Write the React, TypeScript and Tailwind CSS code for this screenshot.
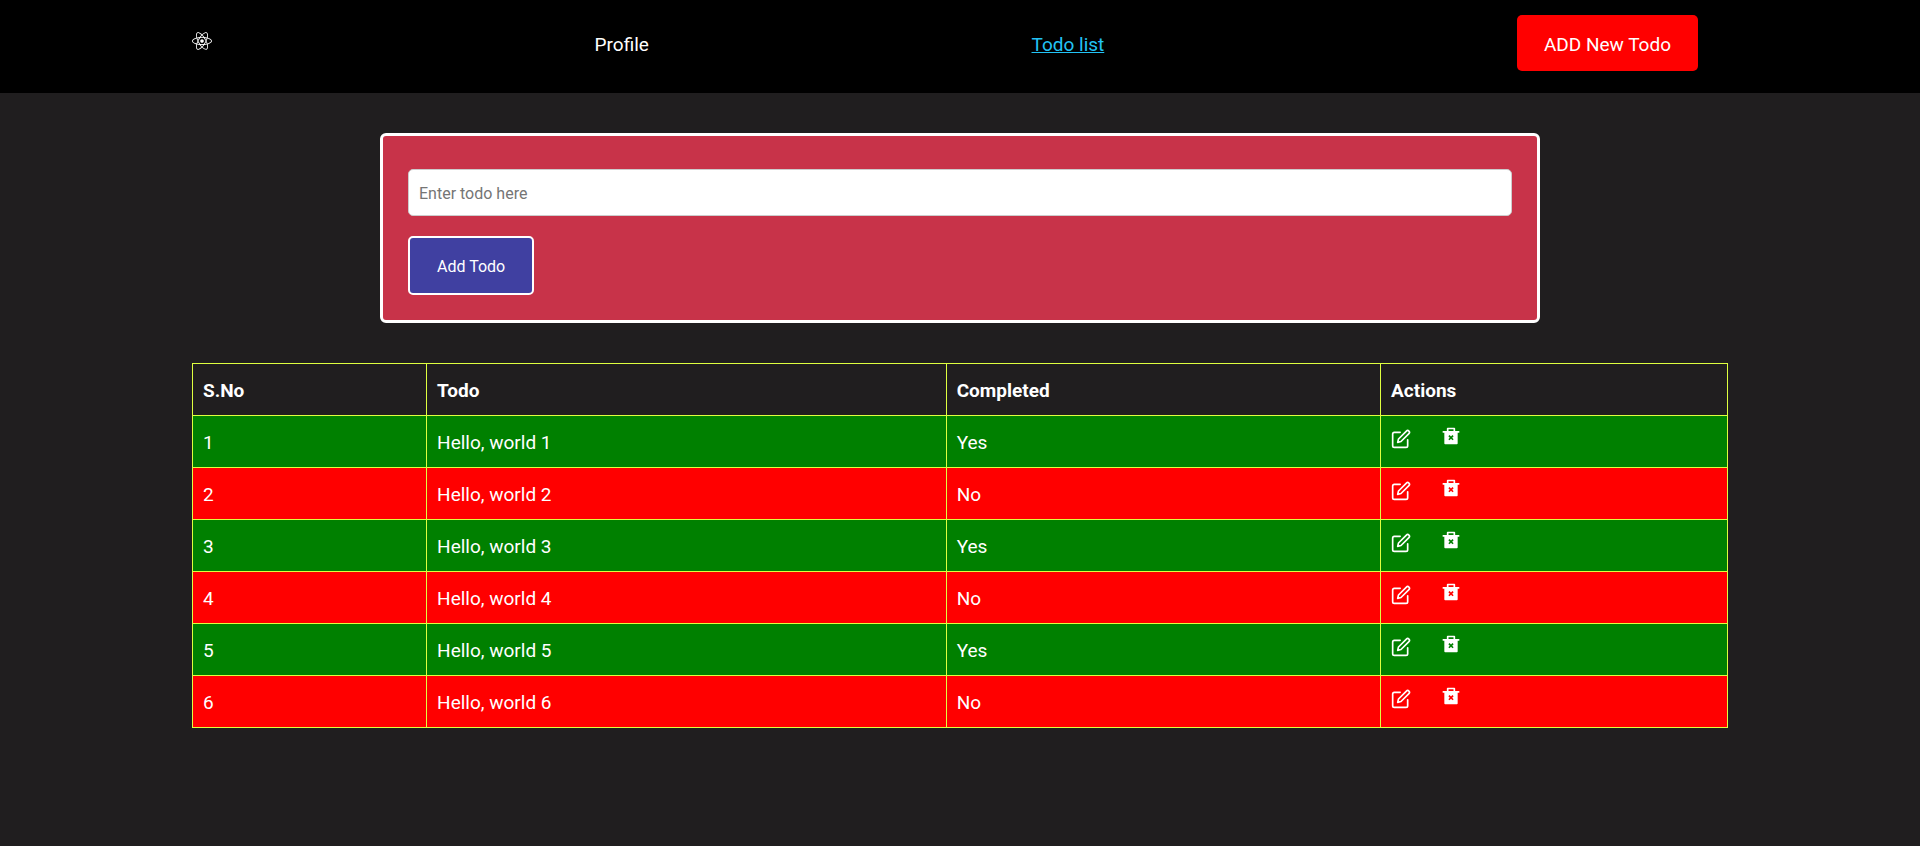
import { FaReact } from "react-icons/fa";
import { FiEdit } from "react-icons/fi";
import { RiDeleteBin2Fill } from "react-icons/ri";

type Todo = { id: number; title: string; completed: boolean };

const todos: Todo[] = [1, 2, 3, 4, 5, 6].map((id) => ({
  id,
  title: `Hello, world ${id}`,
  completed: id % 2 === 1,
}));

function Header() {
  return (
    <header className="bg-black pt-[15px] pb-[22px]">
      <nav className="mx-auto flex w-4/5 items-center justify-between">
        <a href="#home" aria-label="Home" className="pb-1">
          <FaReact size={20} />
        </a>
        <a href="#profile" className="pt-1">Profile</a>
        <a href="#todos" className="pt-1 text-[#22c3f5] underline">
          Todo list
        </a>
        <button type="button" className="mx-[30px] h-14 rounded-[5px] bg-[#ff0000] px-[27px] pt-1">
          ADD New Todo
        </button>
      </nav>
    </header>
  );
}

function TodoForm() {
  return (
    <form
      onSubmit={(e) => e.preventDefault()}
      className="mx-auto mt-10 flex w-full max-w-[1160px] flex-col items-start gap-5 rounded-md border-3 border-white bg-[#c83349] px-[25px] pt-[33px] pb-[25px] text-base"
    >
      <input
        type="text"
        aria-label="Todo"
        placeholder="Enter todo here"
        className="h-[47px] w-full rounded-[5px] border border-[#cccccc] bg-white px-2.5 pt-0.5 text-black placeholder:text-[#757575]"
      />
      <button type="submit" className="h-[59px] rounded-[5px] border-2 border-white bg-[#4040a1] px-[27px] pt-0.5">
        Add Todo
      </button>
    </form>
  );
}

const cell = "h-[52px] border border-[#dfff3f] px-2.5 pt-0.5 text-left";

function TodoTable() {
  return (
    <table className="mx-auto mt-10 w-4/5 table-fixed border-collapse">
      <thead>
        <tr>
          <th className={`${cell} w-[15.25%]`}>S.No</th>
          <th className={`${cell} w-[33.85%]`}>Todo</th>
          <th className={`${cell} w-[28.3%]`}>Completed</th>
          <th className={cell}>Actions</th>
        </tr>
      </thead>
      <tbody>
        {todos.map((todo) => (
          <tr key={todo.id} className={todo.completed ? "bg-[#008000]" : "bg-[#ff0000]"}>
            <td className={cell}>{todo.id}</td>
            <td className={cell}>{todo.title}</td>
            <td className={cell}>{todo.completed ? "Yes" : "No"}</td>
            <td className={cell}>
              <div className="flex items-start gap-[30px] pb-2.5">
                <button type="button" aria-label={`Edit ${todo.title}`} className="pt-[3px]">
                  <FiEdit size={20} />
                </button>
                <button type="button" aria-label={`Delete ${todo.title}`}>
                  <RiDeleteBin2Fill size={20} />
                </button>
              </div>
            </td>
          </tr>
        ))}
      </tbody>
    </table>
  );
}

export default function App() {
  return (
    <div className="min-h-screen bg-[#201e1f] font-['Roboto',sans-serif] text-[19px] leading-7 text-white">
      <Header />
      <main className="pb-10">
        <TodoForm />
        <TodoTable />
      </main>
    </div>
  );
}
